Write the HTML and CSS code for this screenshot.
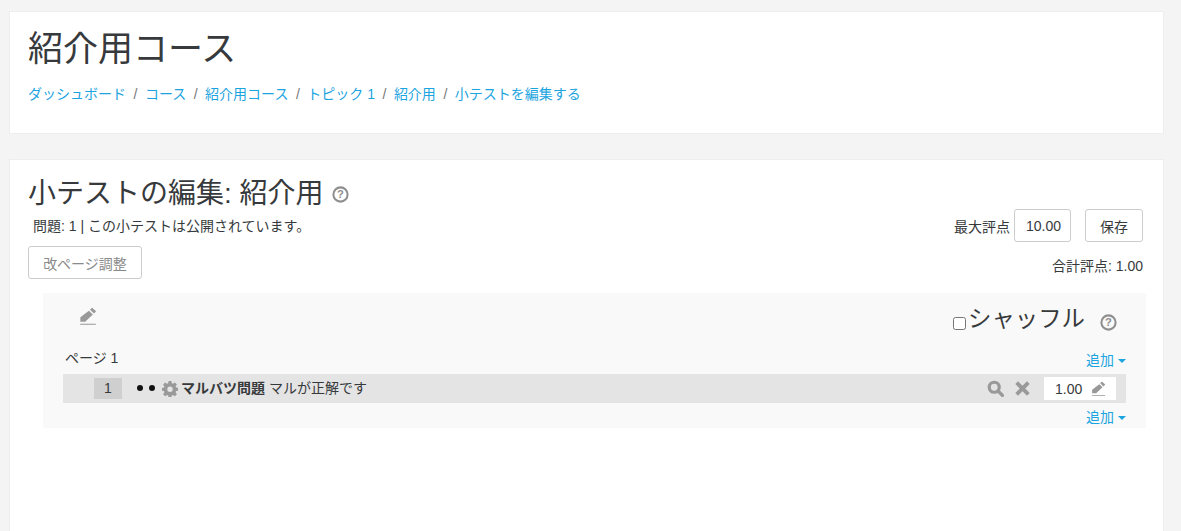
FILE: index.html
```html
<!DOCTYPE html>
<html lang="ja">
<head>
<meta charset="utf-8">
<title>小テストを編集する</title>
<link rel="stylesheet" href="styles.css">
</head>
<body>
<header class="card page-header">
  <h1 class="course-title">紹介用コース</h1>
  <nav class="crumbs">
    <a href="#">ダッシュボード</a><span class="sep">/</span>
    <a href="#" class="plain">コース</a><span class="sep">/</span>
    <a href="#">紹介用コース</a><span class="sep">/</span>
    <a href="#">トピック 1</a><span class="sep">/</span>
    <a href="#">紹介用</a><span class="sep">/</span>
    <a href="#">小テストを編集する</a>
  </nav>
</header>
<main class="card content">
  <h2 class="edit-title">小テストの編集: 紹介用
    <svg class="help" viewBox="0 0 16 16"><circle cx="8" cy="8" r="6.7" fill="none" stroke="currentColor" stroke-width="1.9"/><text x="8" y="11.6" text-anchor="middle" class="help-q">?</text></svg>
  </h2>
  <div class="toolbar">
    <div class="toolbar-left">
      <p class="status">問題: 1 | この小テストは公開されています。</p>
      <button class="btn disabled" type="button">改ページ調整</button>
    </div>
    <div class="toolbar-right">
      <div class="grade-form">
        <label class="grade-label" for="maxgrade">最大評点</label>
        <input id="maxgrade" class="grade-input" type="text" value="10.00">
        <button class="btn save" type="button">保存</button>
      </div>
      <p class="total">合計評点: 1.00</p>
    </div>
  </div>
  <section class="slots">
    <div class="slots-head">
      <svg class="pencil-big" viewBox="0 0 16 16"><path d="M11.6 0.6l3.6 3.2-1.9 2-3.5-3.300zM8.800 3.400l3.500 3.300-6.800 6.400H1.200l0-3.900zM1 14.800h14v.9H1z" fill="currentColor"/></svg>
      <div class="shuffle">
        <input class="shuffle-box" type="checkbox">
        <span class="shuffle-label">シャッフル</span>
        <svg class="help help-low" viewBox="0 0 16 16"><circle cx="8" cy="8" r="6.7" fill="none" stroke="currentColor" stroke-width="1.9"/><text x="8" y="11.6" text-anchor="middle" class="help-q">?</text></svg>
      </div>
    </div>
    <div class="page-row">
      <span class="page-label">ページ 1</span>
      <a href="#" class="add">追加<span class="caret"></span></a>
    </div>
    <div class="slot">
      <span class="slot-num">1</span>
      <span class="dots"><i></i><i></i></span>
      <svg class="gear" viewBox="0 0 16 16"><path fill="currentColor" fill-rule="evenodd" d="M6.600 0h2.800l.4 2.200 1.200.5 1.900-1.300 2 2-1.300 1.900.5 1.200 2.200.4v2.800l-2.200.4-.5 1.200 1.300 1.900-2 2-1.900-1.300-1.200.5-.4 2.200H6.600l-.4-2.200-1.200-.5-1.900 1.300-2-2 1.300-1.900-.5-1.200L-.3 9.800V7l2.200-.4.500-1.200L1.100 3.400l2-2L5 2.700l1.200-.5zM8 5.500a2.700 2.700 0 1 0 0 5.400 2.700 2.700 0 0 0 0-5.400z"/></svg>
      <span class="q-name"><b>マルバツ問題</b> マルが正解です</span>
      <span class="slot-actions">
        <svg class="act" viewBox="0 0 16 16"><circle cx="6.800" cy="6.800" r="4.700" fill="none" stroke="currentColor" stroke-width="3"/><path d="M10.500 10.500l4 4" stroke="currentColor" stroke-width="3.200" stroke-linecap="round"/></svg>
        <svg class="act cross" viewBox="0 0 16 16"><path d="M2.500 2.500l11 11M13.500 2.500l-11 11" stroke="currentColor" stroke-width="3.600" fill="none"/></svg>
        <span class="mark">1.00<svg class="pencil-small" viewBox="0 0 16 16"><path d="M11.600 0.600l3.600 3.200-1.900 2-3.500-3.300zM8.800 3.400l3.500 3.300-6.800 6.400H1.200l0-3.900zM1 14.800h14v.9H1z" fill="currentColor"/></svg></span>
      </span>
    </div>
    <div class="page-row end">
      <a href="#" class="add">追加<span class="caret"></span></a>
    </div>
  </section>
</main>
</body>
</html>
```
FILE: styles.css
```css
* { box-sizing: border-box; }
html, body { height: 531px; overflow: hidden; }
body {
  margin: 0;
  padding: 11px 17px 0 9px;
  background: #f4f4f4;
  color: #373a3c;
  font-family: "Liberation Sans", "Noto Sans CJK JP", sans-serif;
  font-size: 14px;
}
a { color: #1ca4e0; text-decoration: none; }
.card { background: #fff; border: 1px solid #eee; }
.page-header { height: 123px; padding: 15px 18px 0; }
.course-title { margin: 0; font-size: 35px; font-weight: 400; line-height: 44px; }
.crumbs { display: flex; gap: 7.5px; margin-top: 13px; line-height: 20px; white-space: nowrap; }
.crumbs .sep { color: #777; }
.crumbs .plain { color: #1ca4e0; }
.content { margin-top: 25px; height: 400px; padding: 16px 20px 0 18px; }
.edit-title { margin: 0; font-size: 28px; font-weight: 400; line-height: 36px; display: flex; align-items: center; gap: 8px; }
.help { width: 17px; height: 17px; color: #8e8e8e; flex: none; }
.help-low { margin-top: 7px; }
.help-q { font: 700 10.5px "Liberation Sans", sans-serif; fill: currentColor; }
.toolbar { display: flex; justify-content: space-between; align-items: flex-start; }
.status { margin: 4px 0 0 5px; line-height: 20px; }
.btn { height: 33px; padding: 0 14px; background: #fff; border: 1px solid #ccc; border-radius: 3px; font: inherit; color: #373a3c; }
.disabled { display: block; margin-top: 10px; width: 114px; color: #8a8a8a; }
.toolbar-right { display: flex; flex-direction: column; align-items: flex-end; margin-top: -3px; }
.grade-form { display: flex; align-items: center; }
.grade-label { margin-right: 4px; }
.grade-input { width: 57px; height: 33px; padding: 0 0 0 11px; border: 1px solid #ccc; border-radius: 3px; font: inherit; color: #373a3c; }
.save { width: 58px; margin-left: 14px; padding: 0; }
.total { margin: 14px 0 0; line-height: 20px; }
.slots { margin: 14px -3px 0 15px; height: 135px; background: #f9f9f9; padding: 0 20px; }
.slots-head { display: flex; justify-content: space-between; height: 50px; }
.pencil-big { width: 18px; height: 18px; margin: 14px 0 0 16px; color: #999; }
.shuffle { display: flex; align-items: center; margin: 10px 9px 0 0; height: 32px; }
.shuffle-box { width: 13px; height: 13px; margin: 8px 2px 0 0; }
.shuffle-label { font-size: 23.4px; line-height: 32px; margin-right: 15px; }
.page-row { display: flex; justify-content: space-between; align-items: center; height: 31px; }
.page-row.end { justify-content: flex-end; height: 26px; }
.page-label { margin: 0 0 3px 2px; }
.caret { display: inline-block; width: 0; height: 0; margin-left: 4px; vertical-align: 2px; border: 4px solid transparent; border-top-color: currentColor; border-bottom: 0; }
.slot { display: flex; align-items: center; height: 29px; background: #e4e4e4; padding-left: 31px; }
.slot-num { width: 28px; height: 21px; line-height: 21px; text-align: center; background: #cfcfcf; }
.dots { display: flex; gap: 6px; margin: 0 0 2px 15px; }
.dots i { width: 6px; height: 6px; border-radius: 50%; background: #111; }
.gear { width: 16px; height: 16px; margin-left: 7px; color: #999; }
.q-name { margin: 0 0 4px 3px; }
.q-name b { font-weight: 700; }
.slot-actions { margin-left: auto; display: flex; align-items: center; margin-right: 10px; }
.act { width: 17px; height: 17px; color: #999; margin-right: 10px; }
.cross { margin-right: 13px; }
.mark { display: flex; align-items: center; width: 72px; height: 23px; background: #fff; padding-left: 11px; }
.pencil-small { width: 15px; height: 15px; margin-left: 9px; color: #999; }
```
